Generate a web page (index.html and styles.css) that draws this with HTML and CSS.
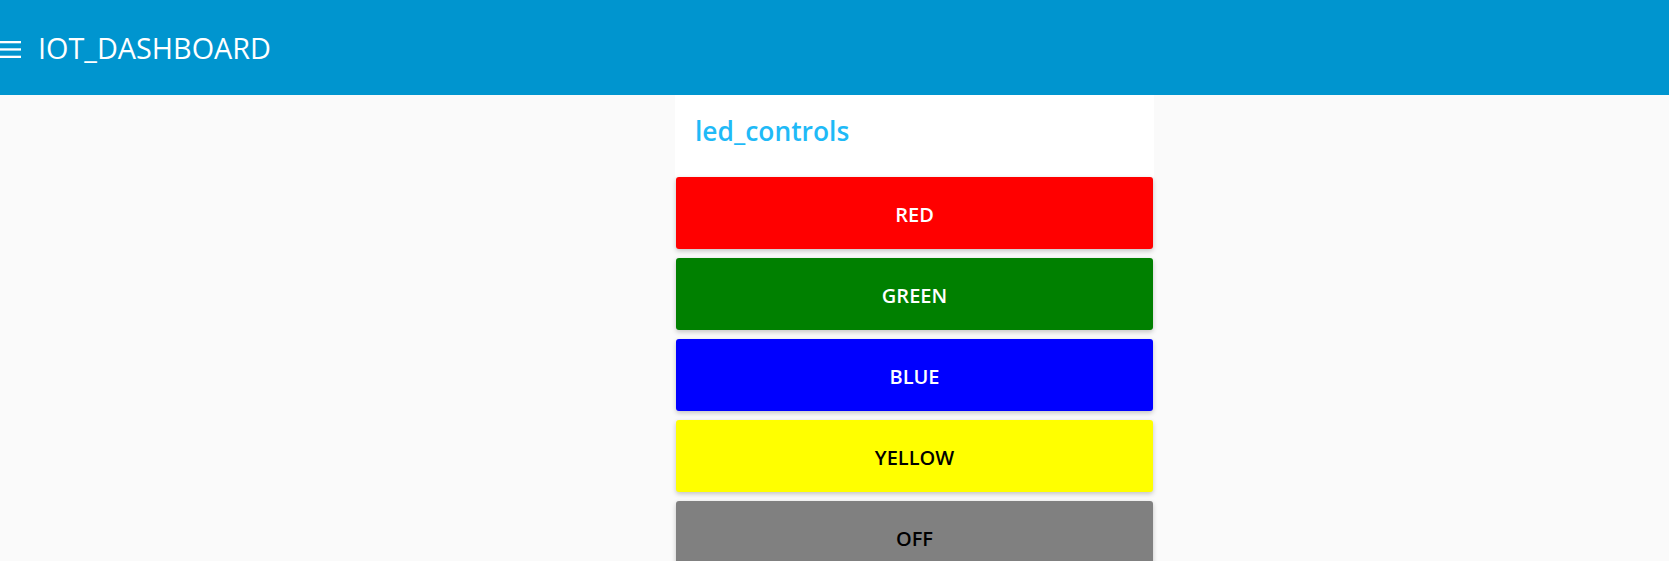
FILE: index.html
```html
<!DOCTYPE html>
<html>
<head>
<meta charset="utf-8">
<link rel="stylesheet" href="styles.css">
</head>
<body>
<header class="toolbar">
  <svg class="menu-icon" width="21" height="18" viewBox="0 0 21 18">
    <rect x="0" y="0" width="21" height="2.3" fill="#fff"/>
    <rect x="0" y="7.3" width="21" height="2.3" fill="#fff"/>
    <rect x="0" y="14.7" width="21" height="2.3" fill="#fff"/>
  </svg>
  <span class="app-title">IOT_DASHBOARD</span>
</header>
<main class="content">
  <section class="group">
    <div class="group-title">led_controls</div>
    <div class="buttons">
      <button class="btn red">RED</button>
      <button class="btn green">GREEN</button>
      <button class="btn blue">BLUE</button>
      <button class="btn yellow">YELLOW</button>
      <button class="btn off">OFF</button>
    </div>
  </section>
</main>
</body>
</html>
```
FILE: styles.css
```css
html, body {
  margin: 0;
  padding: 0;
  height: 100%;
  overflow: hidden;
}
body {
  background: #fafafa;
  font-family: "Open Sans", "Noto Sans", sans-serif;
}
.toolbar {
  height: 95px;
  background: #0095cf;
  display: flex;
  align-items: center;
  color: #fff;
}
.menu-icon {
  margin-top: 5px;
  flex: none;
}
.app-title {
  margin-left: 17px;
  font-size: 28.8px;
  font-weight: 400;
}
.content {
  padding-left: 675px;
}
.group {
  width: 479px;
  display: flex;
  flex-direction: column;
}
.group-title {
  background: #fff;
  height: 82px;
  padding-left: 20px;
  box-sizing: border-box;
  padding-top: 18px;
  font-size: 26.4px;
  font-weight: 600;
  color: #1fbaf7;
}
.buttons {
  display: flex;
  flex-direction: column;
  gap: 9px;
  padding: 0 1px;
}
.btn {
  height: 72px;
  border: none;
  border-radius: 3px;
  font-family: inherit;
  font-size: 20px;
  font-weight: 600;
  box-shadow: 0 2px 5px rgba(0,0,0,0.22);
  padding: 3px 0 0;
}
.red { background: #ff0000; color: #fff; }
.green { background: #008000; color: #fff; }
.blue { background: #0000ff; color: #fff; }
.yellow { background: #ffff00; color: #000; }
.off { background: #808080; color: #000; }
```
